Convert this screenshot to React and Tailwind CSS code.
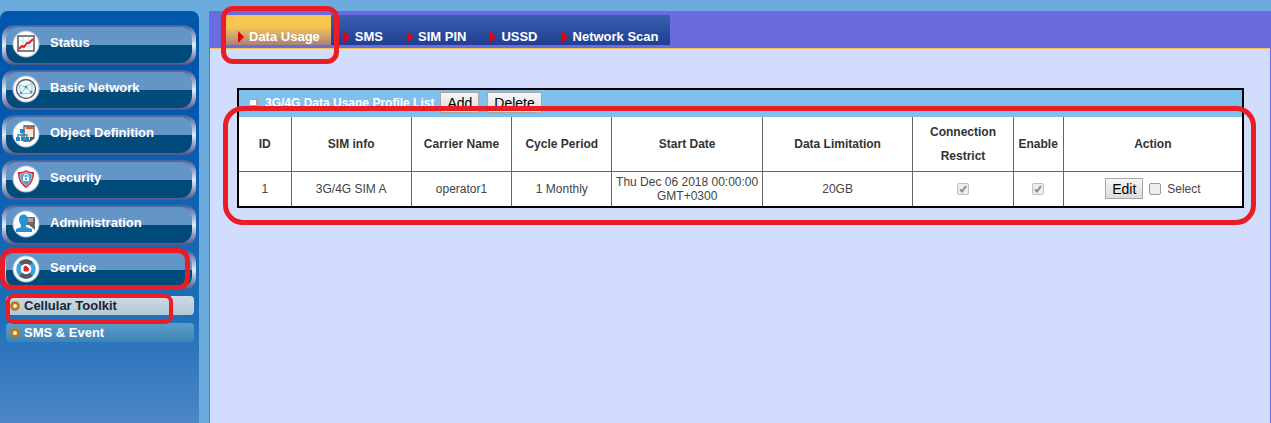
import { clsx } from "clsx";

function StatusIcon() {
  return (
    <>
      <rect x="6" y="6" width="16" height="15" fill="#fff" stroke="#4a4a4a" strokeWidth="1.4" />
      <path d="M11 7v13M17 7v13M7 11h14M7 16h14" stroke="#a9d8e6" strokeWidth="0.8" />
      <path d="M7 19l3-3 2 1 3-4 2 0 4-4" stroke="#e0202a" strokeWidth="2" fill="none" />
    </>
  );
}

function NetworkIcon() {
  return (
    <>
      <circle cx="14" cy="14" r="9.5" fill="#eef8fb" stroke="#556068" strokeWidth="1.4" />
      <path d="M7 10l7 2 6-4M14 12l-5 7M14 12l6 6M9 19l11-1M7 10l2 9M20 8v10" stroke="#69b4d8" fill="none" strokeWidth="0.8" />
      <circle cx="14" cy="12" r="1.5" fill="#3f97c8" />
      <circle cx="9" cy="18" r="1.2" fill="#3f97c8" />
      <circle cx="19" cy="17" r="1.2" fill="#3f97c8" />
    </>
  );
}

function ObjectIcon() {
  return (
    <>
      <path d="M12 6h10v12l-4 3h-6z" fill="#f6e4de" stroke="#55504e" strokeWidth="1.3" />
      <path d="M14 8h7" stroke="#e4553c" strokeWidth="2" />
      <path d="M18 21v-4h4z" fill="#55504e" />
      <path d="M10 12v3M6 18v-3h9v3M10 15v3" stroke="#1c8ccc" strokeWidth="1.3" fill="none" />
      <path d="M8 9h4v4H8zM4 17h4v4H4zM9 17h3v4H9zM13 17h4v4h-4z" fill="#1c8ccc" />
    </>
  );
}

function SecurityIcon() {
  return (
    <>
      <path d="M14 5c3 2 5 2 8 2 0 7-2 12-8 16C8 19 6 14 6 7c3 0 5 0 8-2z" fill="#d8262c" />
      <path d="M14 7c2 1 4 2 6 2 0 5-2 9-6 12-4-3-6-7-6-12 2 0 4-1 6-2z" fill="#4fa6d6" stroke="#e8eef2" strokeWidth="0.6" />
      <path d="M12 12v-1a2 2 0 014 0v1" stroke="#fff" fill="none" />
      <rect x="11" y="12" width="6" height="4" fill="#fff" />
      <rect x="13" y="13" width="2" height="2" fill="#4fa6d6" />
    </>
  );
}

function AdminIcon() {
  return (
    <>
      <rect x="14" y="7" width="9" height="8" rx="1" fill="#666" />
      <path d="M16 9h5M16 11h5" stroke="#e8e8e8" />
      <path d="M17 15h6v5z" fill="#666" />
      <path d="M7 9c0-6 9-6 9 0 0 3-1 5-2 6v2l6 2v3H4v-3l5-2v-2c-1-1-2-3-2-6z" fill="#2492d4" />
    </>
  );
}

function ServiceIcon() {
  return (
    <>
      <circle cx="14" cy="14" r="7.5" fill="none" stroke="#3ba3dc" strokeWidth="4.5" />
      <path d="M8.7 8.7a7.5 7.5 0 0110.6 0M8.7 19.3a7.5 7.5 0 0010.6 0" fill="none" stroke="#555a5e" strokeWidth="4.5" />
      <circle cx="14" cy="14" r="5" fill="#fff" />
      <path d="M12 12l2-1 3 3-1 2h-4z" fill="#e0202a" stroke="#e0202a" />
    </>
  );
}

const menu = [
  { label: "Status", Icon: StatusIcon },
  { label: "Basic Network", Icon: NetworkIcon },
  { label: "Object Definition", Icon: ObjectIcon },
  { label: "Security", Icon: SecurityIcon },
  { label: "Administration", Icon: AdminIcon },
  { label: "Service", Icon: ServiceIcon, marked: true },
];

const subMenu = [
  { label: "Cellular Toolkit", active: true },
  { label: "SMS & Event", active: false },
];

const tabs = ["Data Usage", "SMS", "SIM PIN", "USSD", "Network Scan"];

const columns = [
  { label: "ID", width: "w-[52px]" },
  { label: "SIM info", width: "w-[12%]" },
  { label: "Carrier Name", width: "w-[10%]" },
  { label: "Cycle Period", width: "w-[10%]" },
  { label: "Start Date", width: "w-[15%]" },
  { label: "Data Limitation", width: "w-[15%]" },
  { label: "Connection Restrict", width: "w-[10%]" },
  { label: "Enable", width: "w-[5%]" },
  { label: "Action", width: "w-auto" },
];

function MenuButton({ label, Icon, marked }) {
  return (
    <li className="relative">
      <a
        href="#"
        className="block h-10 rounded-xl bg-linear-to-b from-[#47609c] via-[#e4ecf6] to-[#4d5589] px-1 py-0.5"
      >
        <span className="flex h-9 items-center rounded-xl bg-linear-to-b from-[#6395c7] from-50% to-[#004b7a] to-50% pl-1.5">
          <svg viewBox="0 0 28 28" className="-mt-0.5 size-7 shrink-0">
            <circle cx="14" cy="14" r="13.5" fill="#b4c2de" />
            <circle cx="14" cy="14" r="12.5" fill="#fff" />
            <Icon />
          </svg>
          <span className="pb-1 pl-2.5 text-[13px] leading-4 font-bold text-white">
            {label}
          </span>
        </span>
      </a>
      {marked && (
        <span className="pointer-events-none absolute -inset-x-0.5 -top-0.5 mr-2 h-[42px] rounded-xl border-5 border-[#ec1c24]" />
      )}
    </li>
  );
}

function SubMenuItem({ label, active }) {
  return (
    <li className="relative">
      <a
        href="#"
        className={clsx(
          "flex h-[19px] items-center gap-1 rounded-sm pl-1 text-[13px] leading-4 font-bold",
          active
            ? "bg-linear-to-b from-[#cfdbe4] to-[#b2c9d3] text-[#1c2430]"
            : "bg-linear-to-b from-[#5b9fc8] to-[#3c83b8] text-white"
        )}
      >
        <svg viewBox="0 0 10 10" className="size-2.5">
          <circle cx="5" cy="5" r="3.4" fill="#fff3cf" stroke="#b87a1c" strokeWidth="2.8" />
        </svg>
        {label}
      </a>
      {active && (
        <span className="pointer-events-none absolute -top-0.5 left-0 z-10 h-[30px] w-[167px] rounded-lg border-4 border-[#ec1c24]" />
      )}
    </li>
  );
}

function Sidebar() {
  return (
    <aside className="w-[199px] shrink-0 rounded-t-lg bg-linear-to-b from-[#0057ac] from-20% via-[#1f70b9] via-75% to-[#4c86c6] pt-3.5">
      <ul className="space-y-[5px] pr-[3px] pl-0.5">
        {menu.map((item) => (
          <MenuButton key={item.label} {...item} />
        ))}
      </ul>
      <ul className="mt-1.5 space-y-2 pr-[5px] pl-1.5">
        {subMenu.map((item) => (
          <SubMenuItem key={item.label} {...item} />
        ))}
      </ul>
    </aside>
  );
}

function Tab({ label, active }) {
  return (
    <li className="relative">
      <a
        href="#"
        className={clsx(
          "flex h-[30px] items-end gap-[5px] bg-linear-to-b pr-[11px] pl-[13px] text-[13px] leading-4 font-bold text-white",
          active
            ? "from-[#f6c650] from-40% to-[#a98277]"
            : "from-[#3a5fb0] to-[#213f92]"
        )}
      >
        <svg viewBox="0 0 6 12" className="mb-0.5 h-3 w-1.5">
          <path d="M0 0l6 6-6 6z" fill="#e3000f" />
        </svg>
        {label}
      </a>
      {active && (
        <span className="pointer-events-none absolute -top-[9px] -right-2 -left-1 z-10 h-[58px] rounded-xl border-5 border-[#ec1c24]" />
      )}
    </li>
  );
}

function Button({ children }) {
  return (
    <button
      type="button"
      className="h-[21px] border border-[#a6a6a6] bg-linear-to-b from-[#f6f6f6] to-[#dcdcdc] px-1.5 text-sm leading-4 text-black"
    >
      {children}
    </button>
  );
}

function Checkbox({ label, checked, disabled }) {
  return (
    <span className="grid place-items-center">
      <input
        type="checkbox"
        aria-label={label}
        defaultChecked={checked}
        disabled={disabled}
        className={clsx(
          "peer col-start-1 row-start-1 size-3 appearance-none rounded-xs border bg-[#eee]",
          disabled ? "border-[#c0c0c0]" : "border-[#999]"
        )}
      />
      <svg
        viewBox="0 0 12 12"
        className="pointer-events-none invisible col-start-1 row-start-1 size-3 peer-checked:visible"
      >
        <path d="M3 6.5l2 2 4-5.5" fill="none" stroke="#8c8c8c" strokeWidth="2" />
      </svg>
    </span>
  );
}

function ProfileList() {
  return (
    <div className="relative">
      <section className="border-2 border-black bg-white">
        <header className="flex h-[27px] items-center bg-[#7fc0ec] pb-0.5 pl-2.5">
          <svg viewBox="0 0 10 8" className="h-2 w-2.5">
            <path d="M1 0h9v7H8v1H1z" fill="#a5aab0" />
            <path d="M1 1h6v5H1z" fill="#fff" />
          </svg>
          <h2 className="mr-1.5 ml-1.5 text-xs font-bold text-white">
            3G/4G Data Usage Profile List
          </h2>
          <div className="flex gap-2">
            <Button>Add</Button>
            <Button>Delete</Button>
          </div>
        </header>
        <table className="w-full table-fixed border-collapse text-center text-xs text-[#444]">
          <thead>
            <tr className="h-[54px] border-b border-[#666]">
              {columns.map(({ label, width }) => (
                <th
                  key={label}
                  className={clsx(
                    width,
                    "border-r border-[#666] leading-6 font-bold text-[#333] last:border-r-0"
                  )}
                >
                  {label}
                </th>
              ))}
            </tr>
          </thead>
          <tbody>
            <tr className="h-[35px] leading-[14px] *:border-r *:border-[#666] *:last:border-r-0">
              <td>1</td>
              <td>3G/4G SIM A</td>
              <td>operator1</td>
              <td>1 Monthly</td>
              <td>
                Thu Dec 06 2018 00:00:00 <br />
                GMT+0300
              </td>
              <td>20GB</td>
              <td>
                <Checkbox label="Connection Restrict" checked disabled />
              </td>
              <td>
                <Checkbox label="Enable" checked disabled />
              </td>
              <td>
                <div className="flex items-center justify-center gap-1.5">
                  <Button>Edit</Button>
                  <label className="flex items-center gap-1.5">
                    <Checkbox />
                    Select
                  </label>
                </div>
              </td>
            </tr>
          </tbody>
        </table>
      </section>
      <span className="pointer-events-none absolute top-[18px] -right-3 -left-3.5 h-[119px] rounded-[20px] border-5 border-[#ec1c24]" />
    </div>
  );
}

export default function App() {
  return (
    <div className="flex min-h-screen gap-2.5 bg-[#6cabdd] pt-[11px] font-['Liberation_Sans',Arial,sans-serif]">
      <Sidebar />
      <main className="min-w-0 flex-1 border-x border-[#6b6be0] bg-[#d2dcfc]">
        <nav className="border-b border-[#f2c35c] bg-[#6b6be0] pt-1 pb-[3px] pl-[15px]">
          <ul className="flex">
            {tabs.map((label, i) => (
              <Tab key={label} label={label} active={i === 0} />
            ))}
          </ul>
        </nav>
        <div className="pt-[39px] pr-[26px] pl-[27px]">
          <ProfileList />
        </div>
      </main>
    </div>
  );
}
